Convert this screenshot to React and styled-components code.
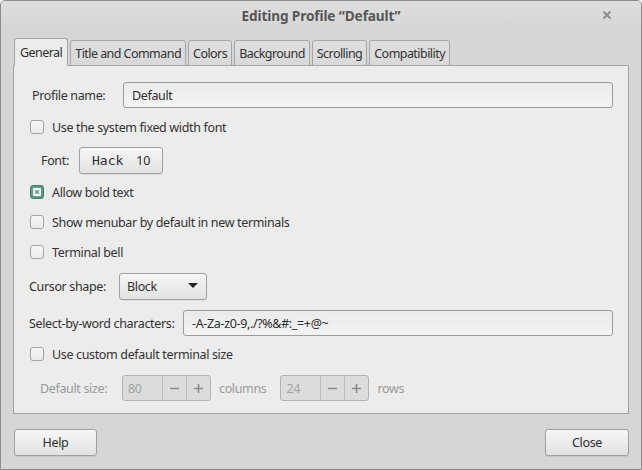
import React from "react";
import styled, { createGlobalStyle } from "styled-components";

const Global = createGlobalStyle`
  html, body {
    margin: 0;
    padding: 0;
    background: #f2f2f2;
  }
  body {
    font-family: "Noto Sans", "DejaVu Sans", sans-serif;
    font-size: 12.5px;
    color: #323232;
  }
`;

const Window = styled.div`
  width: 642px;
  height: 470px;
  box-sizing: border-box;
  border: 1px solid #8c8c8c;
  border-radius: 5px 5px 0 0;
  background: #d6d6d6;
  display: flex;
  flex-direction: column;
  overflow: hidden;
`;

const TitleBar = styled.div`
  height: 28px;
  display: flex;
  align-items: center;
  justify-content: center;
  position: relative;
  background: linear-gradient(#dedede, #d6d6d6);
`;

const Title = styled.div`
  font-weight: bold;
  font-size: 13.6px;
  color: #565656;
  letter-spacing: -0.1px;
`;

const CloseX = styled.div`
  position: absolute;
  right: 27px;
  top: 7px;
  width: 14px;
  height: 14px;
  display: flex;
  align-items: center;
  justify-content: center;
`;

const Body = styled.div`
  padding: 10px 12px 0 12px;
  display: flex;
  flex-direction: column;
`;

const TabBar = styled.div`
  display: flex;
  align-items: flex-end;
  gap: 2px;
  padding-left: 1px;
  height: 27px;
  position: relative;
  z-index: 1;
  margin-bottom: -1px;
`;

const Tab = styled.div`
  box-sizing: border-box;
  height: ${(p) => (p.$active ? "28px" : "26px")};
  padding: 0 ${(p) => (p.$active ? 5 : 4)}px;
  display: flex;
  align-items: center;
  border: 1px solid #a6a6a6;
  border-bottom: ${(p) => (p.$active ? "1px solid #ececec" : "1px solid #a6a6a6")};
  border-radius: 3px 3px 0 0;
  background: ${(p) => (p.$active ? "#ececec" : "linear-gradient(#dfdfdf, #d9d9d9)")};
  color: ${(p) => (p.$active ? "#2e2e2e" : "#333")};
  letter-spacing: -0.55px;
  white-space: nowrap;
`;

const Panel = styled.div`
  box-sizing: border-box;
  height: 349px;
  background: #ececec;
  border: 1px solid #a3a3a3;
  padding: 16px 15px 0 15px;
  display: flex;
  flex-direction: column;
`;

const Row = styled.div`
  display: flex;
  align-items: center;
  height: ${(p) => p.$h || 20}px;
  margin-top: ${(p) => p.$mt || 0}px;
  padding-left: ${(p) => p.$indent || 0}px;
  letter-spacing: -0.35px;
  white-space: nowrap;
`;

const Label = styled.span`
  width: ${(p) => (p.$w ? `${p.$w}px` : "auto")};
  flex-shrink: 0;
  color: ${(p) => (p.$dim ? "#9a9a9a" : "#323232")};
`;

const Entry = styled.div`
  box-sizing: border-box;
  flex: 1;
  height: 26px;
  border: 1px solid #9c9c9c;
  border-radius: 3px;
  background: linear-gradient(#ebebeb, #f3f3f3);
  display: flex;
  align-items: center;
  padding-left: 8px;
  color: #2e2e2e;
`;

const CheckBox = styled.div`
  box-sizing: border-box;
  width: 14px;
  height: 14px;
  border-radius: 3px;
  border: 1px solid ${(p) => (p.$checked ? "#487e69" : "#a3a3a3")};
  background: ${(p) => (p.$checked ? "#5b9a82" : "linear-gradient(#f6f6f6, #ececec)")};
  margin-right: 8px;
  margin-left: 1px;
  display: flex;
  align-items: center;
  justify-content: center;
`;

const Button = styled.div`
  box-sizing: border-box;
  width: ${(p) => p.$w}px;
  height: ${(p) => p.$h || 27}px;
  border: 1px solid #a0a0a0;
  border-radius: 3px;
  background: linear-gradient(#f6f6f6, #e2e2e2);
  display: flex;
  align-items: center;
  justify-content: ${(p) => p.$justify || "center"};
  padding: ${(p) => p.$pad || "0"};
  color: #2e2e2e;
  letter-spacing: -0.35px;
  box-shadow: 0 1px 0 rgba(0, 0, 0, 0.06);
`;

const Mono = styled.span`
  font-family: "DejaVu Sans Mono", monospace;
  font-size: 13px;
  letter-spacing: 0;
  margin-right: 13px;
`;

const Spin = styled.div`
  box-sizing: border-box;
  height: 26px;
  width: 89px;
  display: flex;
  border: 1px solid #b2b2b2;
  border-radius: 3px;
  background: #dcdcdc;
  color: #a3a3a3;
  overflow: hidden;
  margin-right: ${(p) => p.$mr}px;
`;

const SpinValue = styled.div`
  flex: 1;
  display: flex;
  align-items: center;
  padding-left: 5px;
`;

const SpinBtn = styled.div`
  width: 23px;
  border-left: 1px solid #bdbdbd;
  display: flex;
  align-items: center;
  justify-content: center;
`;

const Footer = styled.div`
  display: flex;
  justify-content: space-between;
  padding: 15px 12px 0 13px;
`;

const Unit = styled.span`
  color: #9a9a9a;
  margin-right: ${(p) => p.$mr || 0}px;
`;

function Check({ checked, children }) {
  return (
    <>
      <CheckBox $checked={checked}>
        {checked && (
          <svg width="8" height="8" viewBox="0 0 8 8">
            <rect x="0" y="0" width="8" height="8" fill="#fff" rx="1" />
            <path d="M2 2L6 6M6 2L2 6" stroke="#5b9a82" strokeWidth="1.4" />
          </svg>
        )}
      </CheckBox>
      <span>{children}</span>
    </>
  );
}

function Minus() {
  return (
    <svg width="11" height="11" viewBox="0 0 11 11">
      <path d="M1 5.5H10" stroke="#8a8a8a" strokeWidth="1.6" />
    </svg>
  );
}

function Plus() {
  return (
    <svg width="11" height="11" viewBox="0 0 11 11">
      <path d="M1 5.5H10M5.5 1V10" stroke="#8a8a8a" strokeWidth="1.6" />
    </svg>
  );
}

const tabs = ["General", "Title and Command", "Colors", "Background", "Scrolling", "Compatibility"];

export default function App() {
  return (
    <>
      <Global />
      <Window>
        <TitleBar>
          <Title>Editing Profile “Default”</Title>
          <CloseX>
            <svg width="10" height="10" viewBox="0 0 10 10">
              <path d="M1.5 1.5L8.5 8.5M8.5 1.5L1.5 8.5" stroke="#8e8e8e" strokeWidth="2" />
            </svg>
          </CloseX>
        </TitleBar>
        <Body>
          <TabBar>
            {tabs.map((t, i) => (
              <Tab key={t} $active={i === 0}>
                {t}
              </Tab>
            ))}
          </TabBar>
          <Panel>
            <Row $h={26} $indent={3}>
              <Label $w={91}>Profile name:</Label>
              <Entry>Default</Entry>
            </Row>
            <Row $mt={9}>
              <Check>Use the system fixed width font</Check>
            </Row>
            <Row $h={27} $mt={10} $indent={12}>
              <Label $w={38}>Font:</Label>
              <Button $w={84}>
                <Mono>Hack</Mono>10
              </Button>
            </Row>
            <Row $mt={8}>
              <Check checked>Allow bold text</Check>
            </Row>
            <Row $mt={10}>
              <Check>Show menubar by default in new terminals</Check>
            </Row>
            <Row $mt={10}>
              <Check>Terminal bell</Check>
            </Row>
            <Row $h={26} $mt={11}>
              <Label $w={90}>Cursor shape:</Label>
              <Button $w={88} $h={27} $justify="space-between" $pad="0 8px 0 7px">
                Block
                <svg width="10" height="6" viewBox="0 0 10 6">
                  <path d="M0 0H10L5 5Z" fill="#222" />
                </svg>
              </Button>
            </Row>
            <Row $h={26} $mt={11}>
              <Label $w={154}>Select-by-word characters:</Label>
              <Entry>-A-Za-z0-9,./?%&amp;#:_=+@~</Entry>
            </Row>
            <Row $mt={8}>
              <Check>Use custom default terminal size</Check>
            </Row>
            <Row $h={26} $mt={11} $indent={11}>
              <Label $w={82} $dim>
                Default size:
              </Label>
              <Spin $mr={8}>
                <SpinValue>80</SpinValue>
                <SpinBtn>
                  <Minus />
                </SpinBtn>
                <SpinBtn>
                  <Plus />
                </SpinBtn>
              </Spin>
              <Unit $mr={14}>columns</Unit>
              <Spin $mr={8}>
                <SpinValue>24</SpinValue>
                <SpinBtn>
                  <Minus />
                </SpinBtn>
                <SpinBtn>
                  <Plus />
                </SpinBtn>
              </Spin>
              <Unit>rows</Unit>
            </Row>
          </Panel>
        </Body>
        <Footer>
          <Button $w={83} $h={27}>Help</Button>
          <Button $w={84} $h={27}>Close</Button>
        </Footer>
      </Window>
    </>
  );
}
